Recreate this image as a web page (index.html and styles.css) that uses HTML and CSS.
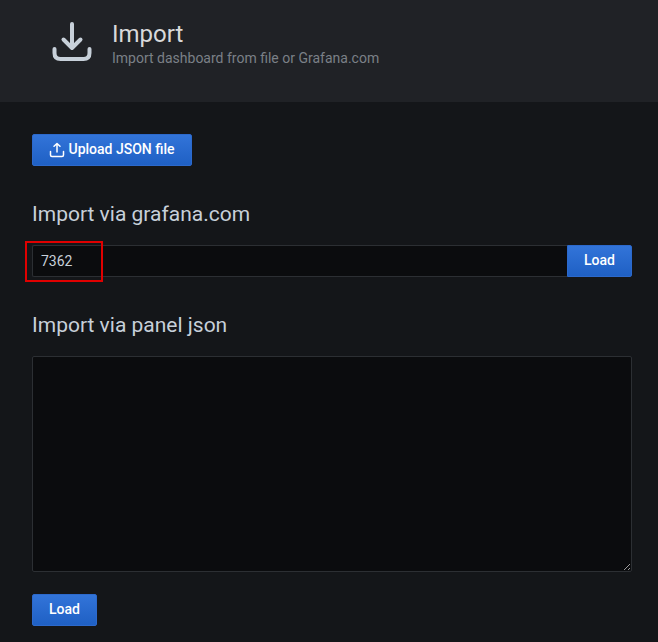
FILE: index.html
```html
<!DOCTYPE html>
<html lang="en">
<head>
<meta charset="utf-8">
<title>Import</title>
<link rel="stylesheet" href="styles.css">
</head>
<body>
<header class="page-header">
  <svg class="header-icon" viewBox="0 0 40 40" width="40" height="40" fill="none" stroke="#c7d0d9" stroke-width="4" stroke-linecap="round" stroke-linejoin="round" aria-hidden="true">
    <path d="M20 2V26M11.5 17.5L20 26L28.5 17.5"/>
    <path d="M2.5 27V31Q2.5 37 8.5 37H31.5Q37.5 37 37.5 31V27"/>
  </svg>
  <div class="header-text">
    <h1 class="title">Import</h1>
    <p class="subtitle">Import dashboard from file or Grafana.com</p>
  </div>
</header>
<main class="content">
  <button class="btn btn-upload" type="button">
    <svg class="btn-icon" viewBox="0 0 16 16" width="16" height="16" fill="none" stroke="#fff" stroke-width="1.5" stroke-linecap="round" stroke-linejoin="round" aria-hidden="true">
      <path d="M8 1.5V10M5 4.3L8 1.5L11 4.3"/>
      <path d="M1.5 9.5V13Q1.5 14.5 3 14.5H13Q14.5 14.5 14.5 13V9.5"/>
    </svg>
    Upload JSON file
  </button>
  <h2 class="section-title first">Import via grafana.com</h2>
  <div class="input-row">
    <input class="text-input" type="text" value="7362">
    <button class="btn btn-attached" type="button">Load</button>
    <span class="highlight"></span>
  </div>
  <h2 class="section-title second">Import via panel json</h2>
  <textarea class="json-input"></textarea>
  <button class="btn btn-load" type="button">Load</button>
</main>
</body>
</html>
```
FILE: styles.css
```css
* { box-sizing: border-box; }
html, body { margin: 0; height: 100%; }
body {
  background: #141619;
  color: #c7d0d9;
  font-family: Roboto, "Liberation Sans", sans-serif;
  overflow: hidden;
}
.page-header {
  height: 102px;
  background: #202226;
  display: flex;
  align-items: flex-start;
  padding: 22px 0 0 52px;
}
.header-icon { flex: none; }
.header-text { margin-left: 20px; }
.title {
  margin: 0;
  font-size: 24px;
  font-weight: 400;
  line-height: 24px;
  color: #d8d9da;
}
.subtitle {
  margin: 4px 0 0;
  font-size: 14px;
  line-height: 16px;
  color: #7b8087;
}
.content {
  padding: 32px 26px 0 32px;
}
.btn {
  display: inline-flex;
  align-items: center;
  justify-content: center;
  height: 32px;
  padding: 0 0 2px;
  border: 1px solid #2c69cc;
  border-radius: 2px;
  background: linear-gradient(180deg, #3274d9, #1f60c4);
  color: #fff;
  font-family: inherit;
  font-size: 14px;
  font-weight: 500;
}
.btn-upload { width: 160px; }
.btn-icon { margin-right: 3px; margin-top: 2px; }
.section-title {
  margin: 0;
  font-size: 21px;
  font-weight: 400;
  line-height: 24px;
  color: #c7d0d9;
}
.section-title.first { margin-top: 36px; }
.section-title.second { margin-top: 36px; }
.input-row {
  position: relative;
  display: flex;
  margin-top: 19px;
  height: 32px;
}
.text-input {
  flex: 1;
  min-width: 0;
  height: 32px;
  padding: 0 8px;
  background: #0b0c0e;
  border: 1px solid #2c2f33;
  border-right: 0;
  border-radius: 2px 0 0 2px;
  color: #c7d0d9;
  font-family: inherit;
  font-size: 14px;
  outline: none;
}
.btn-attached {
  width: 65px;
  flex: none;
  border-radius: 0 2px 2px 0;
}
.highlight {
  position: absolute;
  left: -7px;
  top: -4px;
  width: 78px;
  height: 41px;
  border: 2px solid #e00000;
}
.json-input {
  display: block;
  width: 600px;
  height: 216px;
  margin-top: 19px;
  padding: 8px;
  background: #0b0c0e;
  border: 1px solid #2c2f33;
  border-radius: 2px;
  color: #c7d0d9;
  outline: none;
  resize: both;
}
.btn-load {
  width: 65px;
  margin-top: 22px;
}
```
